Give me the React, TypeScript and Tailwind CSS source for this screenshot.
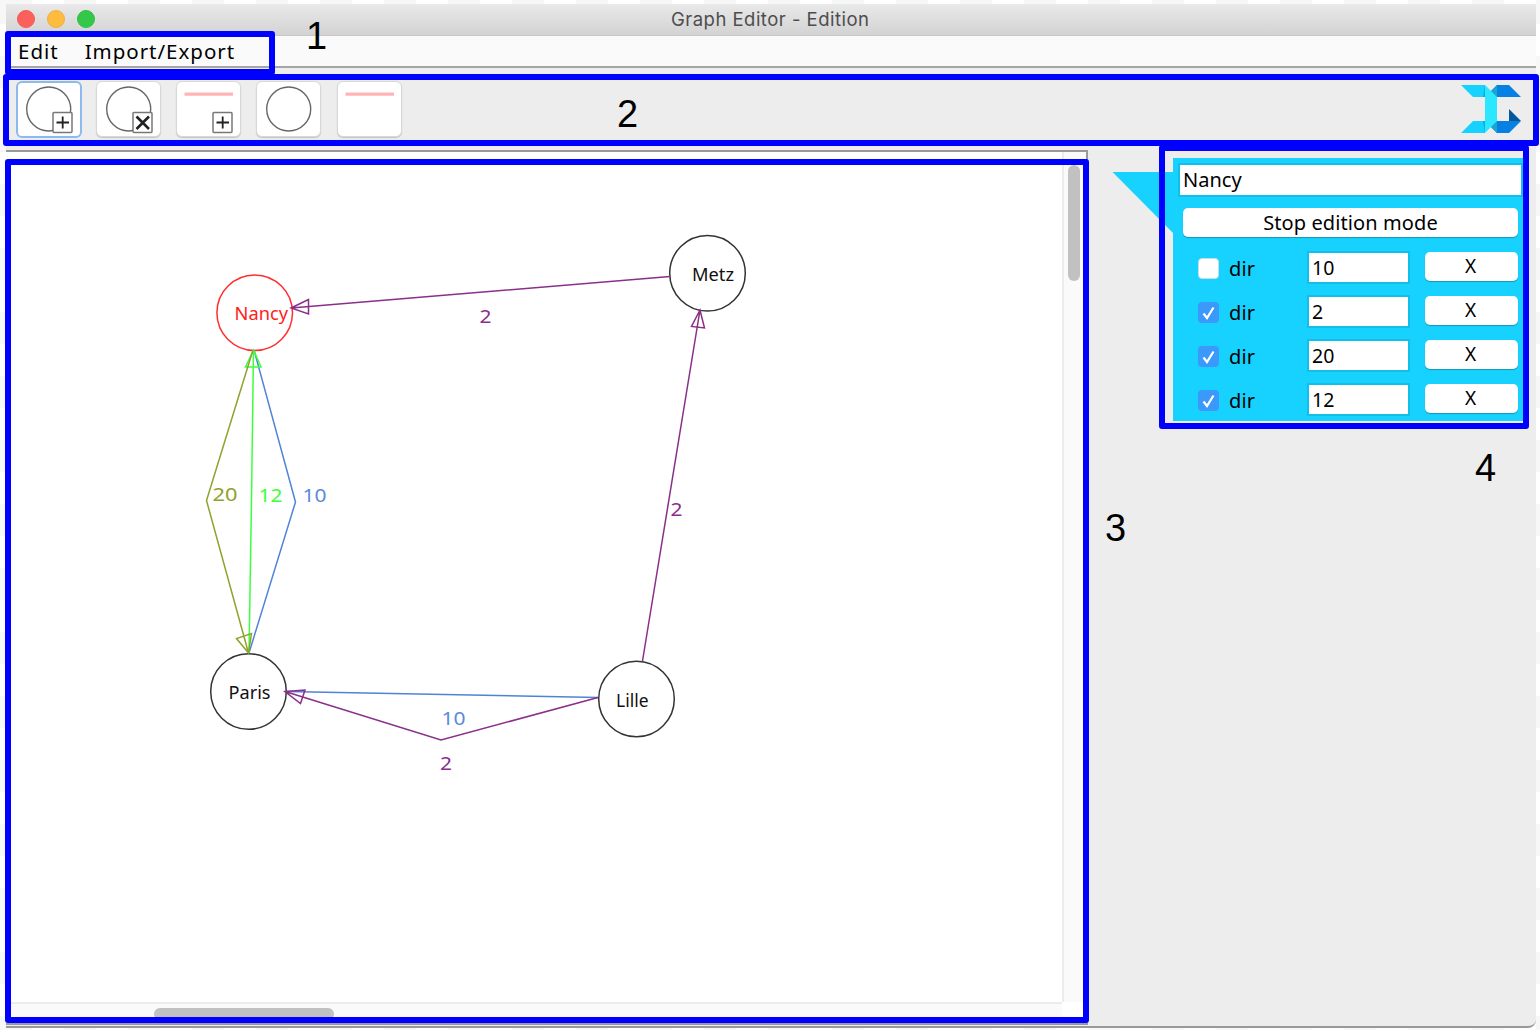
import React from "react";

type EdgeRow = { directed: boolean; weight: string };

const rows: EdgeRow[] = [
  { directed: false, weight: "10" },
  { directed: true, weight: "2" },
  { directed: true, weight: "20" },
  { directed: true, weight: "12" },
];

const purple = "#8a2f8a";

function Label({ x, y, w, color, children }: { x: number; y: number; w: number; color: string; children: string }) {
  return (
    <text x={x} y={y} textLength={w} lengthAdjust="spacingAndGlyphs" fill={color} fontSize="18.5" fontFamily='"Noto Sans", sans-serif'>
      {children}
    </text>
  );
}

function Badge({ kind }: { kind: "plus" | "x" }) {
  return (
    <g fill="none" stroke="#222">
      <rect x="37" y="31.5" width="19" height="20" rx="1" fill="#fff" stroke="#777" strokeWidth="1.5" />
      {kind === "plus" ? (
        <path d="M40.5 41.5h12.5M46.7 35.5v12" strokeWidth="1.8" />
      ) : (
        <path d="M40.5 35.5l12.5 12.5M53 35.5l-12.5 12.5" strokeWidth="2.6" />
      )}
    </g>
  );
}

function ToolButton({ shape, badge, active }: { shape: "circle" | "line"; badge?: "plus" | "x"; active?: boolean }) {
  return (
    <button
      className={
        active
          ? "h-[57px] w-[66px] rounded-md border-2 border-[#8cb9ee] bg-white"
          : "h-[56px] w-[65px] rounded-md border border-[#d8d8d8] bg-white shadow-[0_1px_1px_#c4c4c4]"
      }
    >
      <svg width="65" height="56" viewBox="0 0 65 56" className={active ? "-mt-[2px] -ml-[1.5px]" : "-m-px"}>
        {shape === "circle" ? (
          <circle cx="32.700" cy="28" r="22" fill="none" stroke="#666" strokeWidth="1.4" />
        ) : (
          <path d="M8.5 13.2H57" stroke="#ffb5b5" strokeWidth="3.2" />
        )}
        {badge && <Badge kind={badge} />}
      </svg>
    </button>
  );
}

function Logo() {
  return (
    <svg width="62" height="50" viewBox="0 0 62 50">
      <path d="M1 1H25V13H13Z M1 49H25V37H13Z" fill="#17d2ff" />
      <path d="M25 1V13H23Z M25 49V37H23Z" fill="#12a9d8" />
      <path d="M37 1H49L61 13H31V7Z M31 37H61L49 49H37L31 43Z" fill="#0780e3" />
      <path d="M31 7l6 -6v12h-6Z M31 43l6 6V37h-6Z" fill="#1aa5cf" />
      <path d="M25 1L37 13V37L25 49Z" fill="#2be7ff" />
      <path d="M49 25L61 37H49Z" fill="#04589b" />
    </svg>
  );
}

function Graph() {
  return (
    <svg width="1056" height="850" viewBox="6 152 1056 850" fill="none" strokeWidth="1.5" className="block">
      <g stroke="#333">
        <circle cx="707.500" cy="273.300" r="37.800" />
        <circle cx="248.500" cy="691.500" r="37.800" />
        <circle cx="636.500" cy="699" r="37.800" />
      </g>
      <circle cx="254.700" cy="312.800" r="37.800" stroke="#ff2e2e" />
      <path d="M254 350L295.500 502L249 653M286 691.500L598 697.500" stroke="#4f83d6" />
      <path d="M253.500 350L251.500 500L249 653M253.500 350L245.500 367H261Z" stroke="#3dff3d" />
      <path d="M253 350L206.500 500.500L248.500 653M248.500 653L236.500 638.500L251.500 633.500Z" stroke="#8da32c" />
      <g stroke={purple}>
        <path d="M670 276.500L291 308M291 308L308.500 299.500V314Z" />
        <path d="M642.500 661L700 310M700 310L691.500 326.500L704.500 328Z" />
        <path d="M598 697.500L441 740L285 691.500M285 691.500L305 690L300.500 703.500Z" />
      </g>
      <Label x={234.5} y={320} w={53.5} color="#ff2020">Nancy</Label>
      <Label x={692} y={281} w={42} color="#111">Metz</Label>
      <Label x={228.5} y={699} w={42} color="#111">Paris</Label>
      <Label x={616} y={707} w={32.5} color="#111">Lille</Label>
      <Label x={479.5} y={323} w={12} color={purple}>2</Label>
      <Label x={670.5} y={515.5} w={12} color={purple}>2</Label>
      <Label x={440} y={770} w={12} color={purple}>2</Label>
      <Label x={212.5} y={500.5} w={25} color="#8da32c">20</Label>
      <Label x={258.5} y={502} w={24} color="#3dff3d">12</Label>
      <Label x={302.5} y={502} w={24} color="#5a8bdc">10</Label>
      <Label x={441.5} y={724.5} w={24} color="#5a8bdc">10</Label>
    </svg>
  );
}

function Canvas() {
  return (
    <section className="grid h-[875px] w-[1082px] shrink-0 grid-cols-[1056px_1fr] grid-rows-[850px_1fr] border-t-2 border-r-2 border-b-2 border-[#999] bg-[#fafafa]">
      <div className="bg-white">
        <Graph />
      </div>
      <div className="border-l-2 border-[#ececec] pt-[13px] pl-1">
        <div className="h-[116px] w-3 rounded-full bg-[#c1c1c1]" />
      </div>
      <div className="border-t-2 border-[#ececec] pt-1 pl-[148px]">
        <div className="h-3 w-[180px] rounded-full bg-[#c1c1c1]" />
      </div>
      <div className="bg-white" />
    </section>
  );
}

function Row({ directed, weight }: EdgeRow) {
  return (
    <div className="flex h-11 items-start pl-[25px]">
      <span
        className={
          directed
            ? "mt-[7px] flex h-[21px] w-[21px] items-center justify-center rounded bg-[#3b99fc]"
            : "mt-[7px] h-[21px] w-[21px] rounded border border-[#c5dde4] bg-white"
        }
      >
        {directed && (
          <svg width="15" height="16" viewBox="0 0 15 16">
            <path d="M2.500 8.500L6 13L12.500 2.500" fill="none" stroke="#fff" strokeWidth="2.200" />
          </svg>
        )}
      </span>
      <span className="mt-[5px] ml-[10px] w-[78px] text-[20px] leading-[26px] tracking-[0.2px]">dir</span>
      <div className="h-[33px] w-[103px] border-2 border-[#11bfe9] bg-white pl-[3px] text-[19.5px] leading-[30px] tracking-[0.2px]">{weight}</div>
      <button className="mt-px ml-[15px] h-[29px] w-[93px] rounded-[5px] bg-white pr-[2px] text-[19px] leading-[29px] shadow-[0_1px_1px_#1398b8]">X</button>
    </div>
  );
}

function Inspector() {
  return (
    <aside className="flex pt-[8px] pl-[24px]">
      <svg width="61" height="62" viewBox="0 0 61 62" className="mt-[14px]">
        <path d="M0.500 0H61V61Z" fill="#17d2ff" />
      </svg>
      <div className="h-[263px] w-[351px] bg-[#17d2ff] pt-[5px]">
        <div className="ml-[5px] h-[34px] w-[345px] border-2 border-[#11bfe9] bg-white pl-[3px] text-[20px] leading-[30px]">
          Nancy
        </div>
        <button className="mt-[11px] ml-[10px] block h-[29px] w-[335px] rounded-[5px] bg-white text-[20px] leading-[28px] tracking-[0.1px] shadow-[0_1px_1px_#1398b8]">
          Stop edition mode
        </button>
        <div className="mt-[14px]">
          {rows.map((r) => (
            <Row key={r.weight} {...r} />
          ))}
        </div>
      </div>
    </aside>
  );
}

function Annotations() {
  return (
    <div className="pointer-events-none font-['Liberation_Sans',sans-serif] text-[38px] leading-none text-black">
      <div className="absolute top-[31px] left-[5px] h-[44px] w-[270px] rounded-[3px] border-6 border-[#00f]" />
      <div className="absolute top-[74px] left-[3px] h-[72px] w-[1536px] rounded-[3px] border-6 border-[#00f]" />
      <div className="absolute top-[159px] left-[5px] h-[864px] w-[1084px] rounded-[3px] border-6 border-[#00f]" />
      <div className="absolute top-[145px] left-[1159px] h-[284px] w-[370px] rounded-[3px] border-6 border-[#00f]" />
      <span className="absolute top-[17px] left-[306px]">1</span>
      <span className="absolute top-[95px] left-[617px]">2</span>
      <span className="absolute top-[509px] left-[1105px]">3</span>
      <span className="absolute top-[449px] left-[1475px]">4</span>
    </div>
  );
}

export default function App() {
  return (
    <div className="relative h-[1030px] w-[1540px] overflow-hidden bg-[conic-gradient(#f7f7f7_25%,#fff_0_50%,#f7f7f7_0_75%,#fff_0)] bg-[length:64px_64px] bg-[position:0_24px] pt-1 pl-1.5 font-['Noto_Sans',sans-serif] text-black">
      <main className="flex h-[1024px] w-[1530px] flex-col overflow-hidden rounded-br-lg border-b-2 border-[#999] bg-[#ededed]">
        <header className="flex h-[32px] shrink-0 items-center border-b border-[#c8c8c8] bg-linear-to-b from-[#e9e9e9] to-[#d3d3d3] pl-[11px]">
          <div className="-mt-px flex w-[200px] gap-3">
            <i className="h-[18px] w-[18px] rounded-full border border-[#f15b57] bg-[#fc605c]" />
            <i className="h-[18px] w-[18px] rounded-full border border-[#eeb040] bg-[#fdbc40]" />
            <i className="h-[18px] w-[18px] rounded-full border border-[#30bf45] bg-[#34c84a]" />
          </div>
          <h1 className="ml-[454px] font-['Inter',sans-serif] text-[18.5px] leading-none tracking-[0.48px] text-[#4d4d4d]">Graph Editor - Edition</h1>
        </header>
        <nav className="flex h-[32px] shrink-0 items-center gap-[26px] border-b-2 border-[#a5a5a5] bg-[#fafafa] pt-px pl-[12px] text-[20.5px] leading-none tracking-[0.98px]">
          <span>Edit</span>
          <span>Import/Export</span>
        </nav>
        <div className="flex h-[82px] shrink-0 items-start justify-between pt-[13px] pr-[14px] pl-[9.5px]">
          <div className="flex gap-[15.2px]">
            <ToolButton shape="circle" badge="plus" active />
            <div className="-ml-px flex gap-[15.3px]">
              <ToolButton shape="circle" badge="x" />
              <ToolButton shape="line" badge="plus" />
              <ToolButton shape="circle" />
              <ToolButton shape="line" />
            </div>
          </div>
          <div className="mt-[3px]">
            <Logo />
          </div>
        </div>
        <div className="flex">
          <Canvas />
          <Inspector />
        </div>
      </main>
      <Annotations />
    </div>
  );
}
